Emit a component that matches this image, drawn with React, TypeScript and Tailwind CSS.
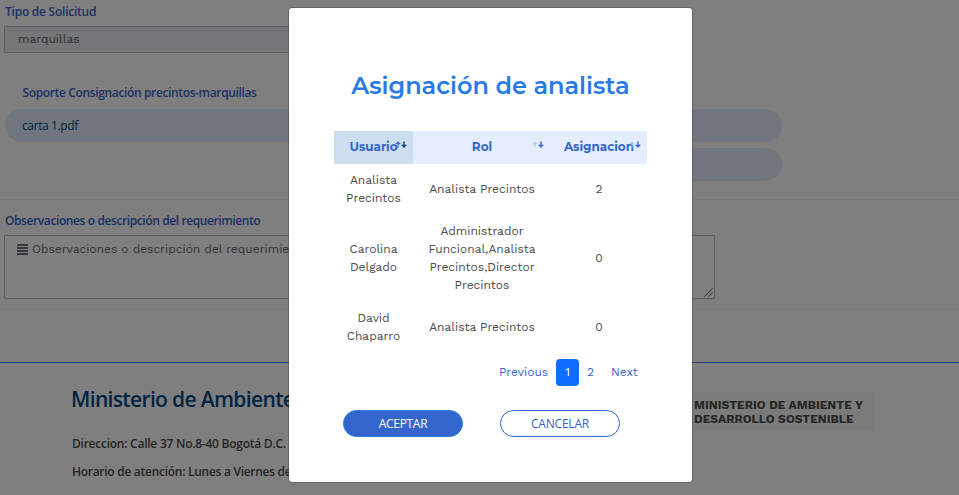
import React from "react";

const segoe = "font-['Open_Sans','Noto_Sans',sans-serif]";
const work = "font-['Work_Sans','Inter',sans-serif]";

function SortArrows({ className, up, down }: { className: string; up: string; down: string }) {
  return (
    <svg className={className} width="12" height="8" viewBox="0 0 12 8" fill="none" strokeWidth="1.2">
      <path d="M3 6.5V1.2M0.8 3.2L3 1L5.2 3.2" stroke={up} />
      <path d="M9 0.5V6M6.8 3.8L9 6L11.2 3.8" stroke={down} strokeWidth="1.4" />
    </svg>
  );
}

function Page() {
  return (
    <div className="h-[495px] w-[959px] overflow-hidden bg-white">
      <div className="flex h-[199px] flex-col">
        <div className={`${segoe} mt-1 ml-[5px] h-4 text-[12px] leading-4 font-semibold whitespace-nowrap text-[#3e64c8]`}>
          <span className="tracking-[-0.24px]">Tipo de Solicitud</span>
        </div>
        <div className={`${work} mt-[6px] ml-1 flex h-[27px] w-[349px] items-center rounded-[1px] border border-[#b9bcc0] bg-[#e9ecef] pb-[2px] pl-[13px] text-[12px] text-[#5c6065]`}>
          marquillas
        </div>
        <div className={`${segoe} mt-8 ml-[22.5px] h-4 text-[12px] leading-4 font-semibold whitespace-nowrap text-[#3e64c8]`}>
          <span className="tracking-[-0.36px]">Soporte Consignación precintos-marquillas</span>
        </div>
        <div className={`${segoe} mt-2 ml-[5px] flex h-[33px] w-[777px] shrink-0 items-center rounded-full bg-[#e2ecfc] pl-[17px] text-[12px] text-[#004884]`}>
          <span className="tracking-[-0.38px]">carta 1.pdf</span>
        </div>
        <div className="mt-[6px] ml-[393px] h-[33px] w-[389px] shrink-0 rounded-full bg-[#e2ecfc]" />
      </div>
      <div className="h-[163px] border-t border-[#f0f0f0]">
        <div className={`${segoe} mt-[13px] ml-[5px] h-4 text-[12px] leading-4 font-semibold whitespace-nowrap text-[#3460c8]`}>
          <span className="tracking-[-0.4px]">Observaciones o descripción del requerimiento</span>
        </div>
        <div className="mt-[6px] ml-1 flex h-16 w-[711px] justify-between rounded-[1px] border border-[#b8b8b8] pt-[7px] pl-3">
          <div className="flex h-3 items-center gap-1">
            <svg width="11" height="11" viewBox="0 0 11 11" fill="#6c757d">
              <path d="M0 0h11v2H0zM0 3h11v2H0zM0 6h11v2H0zM0 9h11v2H0z" />
            </svg>
            <span className={`${work} text-[12px] whitespace-nowrap text-[#626a71]`}>
              Observaciones o descripción del requerimiento
            </span>
          </div>
          <svg className="mr-px mb-px self-end" width="9" height="9" viewBox="0 0 9 9" stroke="#606060" fill="none">
            <path d="M0.5 8.5L8.5 0.5M4.5 8.5L8.5 4.5" />
          </svg>
        </div>
        <div className="mt-[10px] border-t border-[#f8f3f5]" />
      </div>
      <div className="flex h-[133px] border-t border-[#5582ec] pl-[72px]">
        <div className={`${segoe} w-[618px] whitespace-nowrap`}>
          <div className="mt-[21px] -ml-px text-[21px] leading-[30px] font-semibold tracking-[-0.65px] text-[#004884]">Ministerio de Ambiente y Desarrollo</div>
          <div className="mt-[22px] text-[12px] leading-4 font-semibold tracking-[-0.25px] text-[#4b4b4b]">Direccion: Calle 37 No.8-40 Bogotá D.C.</div>
          <div className="mt-3 text-[12px] leading-4 font-semibold tracking-[-0.28px] text-[#4b4b4b]">Horario de atención: Lunes a Viernes de 8:00</div>
        </div>
        <div className={`${work} mt-[29px] h-[39px] w-[183px] bg-[#f7f6f2] pt-[6px] pl-1 text-[12px] leading-[14px] font-bold tracking-[0.03px] whitespace-nowrap text-[#4b4b4b]`}>
          <div>MINISTERIO DE AMBIENTE Y</div>
          <div>DESARROLLO SOSTENIBLE</div>
        </div>
      </div>
    </div>
  );
}

const rows = [
  { user: ["Analista", "Precintos"], role: ["Analista Precintos"], count: 2, height: "h-[51px]" },
  { user: ["Carolina", "Delgado"], role: ["Administrador", "Funcional,Analista", "Precintos,Director", "Precintos"], count: 0, height: "h-[87px]" },
  { user: ["David", "Chaparro"], role: ["Analista Precintos"], count: 0, height: "h-[51px]" },
];

function Lines({ items }: { items: string[] }) {
  return (
    <div>
      {items.map((line) => (
        <div key={line}>{line}</div>
      ))}
    </div>
  );
}

function Modal() {
  return (
    <div className="absolute top-[7px] left-[288px] flex h-[476px] w-[405px] flex-col rounded-[4px] border border-black/20 bg-white bg-clip-padding px-[45px]">
      <h1 className="mt-[62px] flex justify-center font-['Montserrat','Inter',sans-serif] text-[24px] leading-8 font-semibold whitespace-nowrap text-[#287ae6]">
        Asignación de analista
      </h1>
      <div className="mt-[29px] grid h-[33px] grid-cols-[79px_138px_96px] bg-[#e5eeff] text-center font-['Montserrat','Inter',sans-serif] text-[12px] leading-[31px] font-bold text-[#3366cc]">
        <div className="relative bg-[#cedef1]">
          Usuario
          <SortArrows className="absolute top-[10px] right-[6px]" up="#3b64bd" down="#064a86" />
        </div>
        <div className="relative">
          Rol
          <SortArrows className="absolute top-[10px] right-[7px]" up="#b5c9f1" down="#3366cc" />
        </div>
        <div className="relative">
          Asignacion
          <SortArrows className="absolute top-[10px] right-[6px]" up="#a9c0ee" down="#3366cc" />
        </div>
      </div>
      {rows.map((row) => (
        <div
          key={row.user[0]}
          className={`${work} ${row.height} grid grid-cols-[79px_138px_96px] items-center pb-[2px] text-center text-[12px] leading-[18px] whitespace-nowrap text-[#4b4b4b]`}
        >
          <Lines items={row.user} />
          <Lines items={row.role} />
          <div>{row.count}</div>
        </div>
      ))}
      <div className={`${work} mt-[6px] flex h-[27px] items-center pl-[165px] text-[12px] leading-[18px] text-[#3366cc]`}>
        <span className="w-[57px] pb-px">Previous</span>
        <span className="flex h-[27px] w-[23px] items-center justify-center rounded-[4px] bg-[#0d6efd] pb-[2px] text-white">1</span>
        <span className="w-[23px] pb-px text-center">2</span>
        <span className="ml-[9px] pb-px">Next</span>
      </div>
      <div className={`${segoe} mt-6 flex gap-[37px] pl-[9px] text-[12px]`}>
        <button className="h-[27px] w-[120px] rounded-full border border-[#287ae6] bg-[#3366cc] tracking-[-0.3px] text-white">ACEPTAR</button>
        <button className="h-[27px] w-[120px] rounded-full border border-[#3366cc] bg-white tracking-[-0.2px] text-[#3366cc]">CANCELAR</button>
      </div>
    </div>
  );
}

export default function App() {
  return (
    <div className="relative h-[495px] w-[959px] overflow-hidden">
      <Page />
      <div className="absolute inset-0 bg-black/50" />
      <Modal />
    </div>
  );
}
